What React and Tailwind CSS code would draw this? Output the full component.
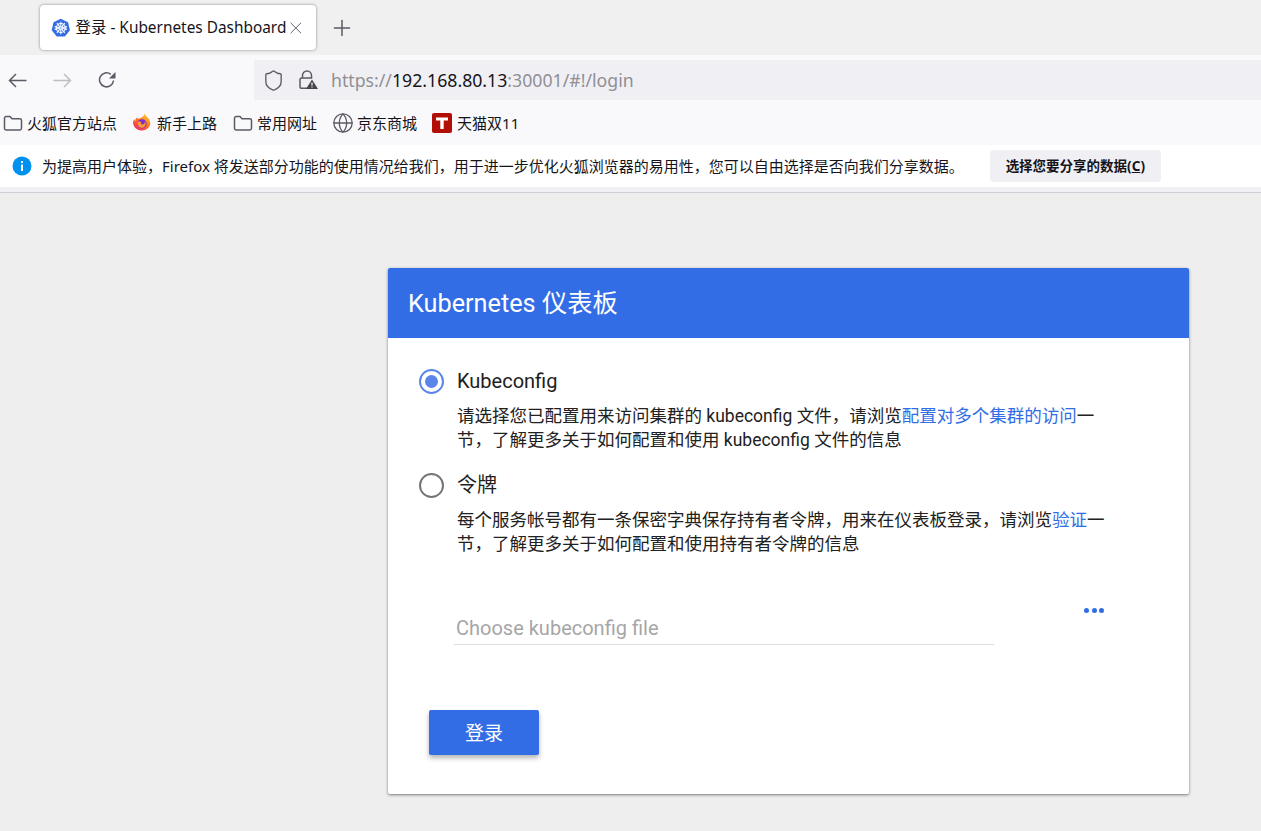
import { Globe, Plus, Shield, X } from "lucide-react";

const uiFont = "font-['Noto_Sans','Noto_Sans_CJK_SC',sans-serif]";
const cardFont = "font-['Roboto','Noto_Sans_CJK_SC',sans-serif]";

const K8sIcon = () => (
  <svg width="20" height="20" viewBox="0 0 20 20">
    <path d="M10 .6 17.4 4.2 19.3 12.2 14.1 18.7H5.900L.7 12.2 2.600 4.200Z" fill="#326de6" />
    <g stroke="#fff" strokeWidth="1.100" fill="none">
      <circle cx="10" cy="10" r="4.600" />
      <circle cx="10" cy="10" r="1.200" />
      <path d="M10 3.600V8.600M10 11.400V16.400M3.700 8.600 8.700 9.700M11.300 10.300 16.300 11.400M16.300 8.600 11.300 9.700M8.700 10.300 3.700 11.400M6 5 9 8.800M11 11.200 14 15M14 5 11 8.800M9 11.200 6 15" />
    </g>
  </svg>
);

const FirefoxIcon = () => (
  <svg width="20" height="20" viewBox="0 0 20 20">
    <defs>
      <linearGradient id="fx" x1="0.8" y1="0" x2="0.2" y2="1">
        <stop offset="0" stopColor="#ffd43a" />
        <stop offset="0.45" stopColor="#ff7a1a" />
        <stop offset="1" stopColor="#f5246e" />
      </linearGradient>
    </defs>
    <path d="M12.500.5c.6 2 2.400 3 3.600 4.400 1.900 2 2.600 4.600 2 7.200A9 9 0 0 1 1 10.200c0-1.600.4-3 1.200-4.300.1 1 .5 1.600 1 2 .2-1.600 1-2.800 2.200-3.400.1.6.3 1 .7 1.300C8.500 5 12 4 12.500.5Z" fill="url(#fx)" />
    <circle cx="10" cy="10.800" r="4.600" fill="#7b2fd0" />
    <path d="M5.400 9.200C7 8 8.500 8.300 9.500 9c-.8.500-1 1.800.2 2.300 1.800.7 3.500-.9 3.100-3 1.300 1.600 1.200 4.200-.6 5.600-2.500 1.900-6.500.7-6.800-4.700Z" fill="#ff9a2e" />
  </svg>
);

const LockWarnIcon = () => (
  <svg width="20" height="20" viewBox="0 0 20 20" fill="none">
    <path d="M4.500 8V5.500a4.500 4.500 0 0 1 9 0V8" stroke="#5b5b66" strokeWidth="1.500" />
    <path d="M9 18.200H3.800A1.800 1.800 0 0 1 2 16.400v-6.600A1.800 1.800 0 0 1 3.800 8h10.400" stroke="#5b5b66" strokeWidth="1.500" />
    <path d="M14 9.500 20 19H8Z" fill="#45454d" />
    <path d="M14 12.500v3M14 16.500v1" stroke="#fff" strokeWidth="1.200" />
  </svg>
);

const InfoIcon = () => (
  <svg width="20" height="20" viewBox="0 0 20 20">
    <circle cx="10" cy="10" r="9.500" fill="#0090ed" />
    <rect x="9" y="8.500" width="2" height="6.500" fill="#fff" />
    <rect x="9" y="5" width="2" height="2" fill="#fff" />
  </svg>
);

const TmallIcon = () => (
  <div className="mr-px flex h-5 w-5 items-center justify-center rounded-[2px] bg-[#b30e06]">
    <svg width="14" height="14" viewBox="0 0 14 14">
      <path d="M1 1.500h12v3H8.700V13H5.300V4.500H1Z" fill="#fff" />
    </svg>
  </div>
);

const BackIcon = ({ className }) => (
  <svg width="19" height="15" viewBox="0 0 19 15" fill="none" stroke="currentColor" strokeWidth="1.500" className={className}>
    <path d="M1.500 7.500H18.500M8 1 1.500 7.500 8 14" />
  </svg>
);

const ReloadIcon = () => (
  <svg width="18" height="18" viewBox="0 0 18 18" fill="none" className="text-[#5b5b66]">
    <path d="M15.500 9.500A7 7 0 1 1 12.800 3.300" stroke="currentColor" strokeWidth="1.500" />
    <path d="M17.500 1V7.500H11Z" fill="currentColor" />
  </svg>
);

const FolderIcon = () => (
  <svg width="20" height="20" viewBox="0 0 20 20" fill="none" stroke="#5b5b66" strokeWidth="1.500">
    <path d="M1.500 5.200A1.700 1.700 0 0 1 3.200 3.500H7L9 5.800H16.800A1.700 1.700 0 0 1 18.500 7.500V15.300A1.700 1.700 0 0 1 16.800 17H3.200A1.700 1.700 0 0 1 1.500 15.300Z" strokeLinejoin="round" />
  </svg>
);

const Bookmark = ({ icon, label, className = "" }) => (
  <div className={`flex items-center gap-1 ${className}`}>
    {icon}
    <span className="text-[15px] leading-5 text-[#15141a]">{label}</span>
  </div>
);

const Radio = ({ checked }) => (
  <div
    className={`flex h-[25px] w-[25px] shrink-0 items-center justify-center rounded-full border-2 ${
      checked ? "border-[#5a86ea]" : "border-[#757575]"
    }`}
  >
    {checked && <div className="h-[13px] w-[13px] rounded-full bg-[#5a86ea]" />}
  </div>
);

const Option = ({ checked, title, children, className = "" }) => (
  <div className={`flex gap-[13px] ${className}`}>
    <Radio checked={checked} />
    <div className="w-[650px]">
      <div className="h-[25px] text-[20px] leading-[25px] text-[#212121]">{title}</div>
      <p className="mt-[10px] text-[17.5px] leading-[24px] text-[#212121]">{children}</p>
    </div>
  </div>
);

const Link = ({ children }) => <span className="text-[#326de6]">{children}</span>;

export default function App() {
  return (
    <div className={`flex h-[831px] w-[1261px] flex-col overflow-hidden bg-[#eeeeee] ${uiFont}`}>
      {/* tab strip */}
      <div className="flex h-[55px] items-start bg-[#f0f0f0]">
        <div className="ml-10 mt-[5px] flex h-[45px] w-[276px] items-center rounded-[4px] bg-white pl-[11px] pr-[10px] shadow-[0_0_3px_rgba(0,0,0,0.45)]">
          <K8sIcon />
          <span className="ml-[5px] flex-1 whitespace-nowrap text-[15.4px] text-[#15141a]">登录 - Kubernetes Dashboard</span>
          <X size={20} strokeWidth={1.2} className="text-[#5b5b66]" />
        </div>
        <Plus size={26} strokeWidth={1.4} className="ml-[13px] mt-[15px] text-[#5b5b66]" />
      </div>

      {/* nav bar */}
      <div className="flex h-[45px] items-start bg-[#f9f9fb] pt-[5px]">
        <div className="flex h-[40px] w-[254px] items-center pl-[8px]">
          <BackIcon className="text-[#5b5b66]" />
          <BackIcon className="ml-[26px] -scale-x-100 text-[#bdbdc2]" />
          <div className="ml-[26px]">
            <ReloadIcon />
          </div>
        </div>
        <div className="flex h-[40px] flex-1 items-center bg-[#f0f0f4] pl-[8px]">
          <Shield size={23} strokeWidth={1.4} className="text-[#5b5b66]" />
          <div className="ml-[13px]">
            <LockWarnIcon />
          </div>
          <span className="ml-[13px] text-[17.7px] text-[#8f8f94]">
            https://<span className="text-[#15141a]">192.168.80.13</span>:30001/#!/login
          </span>
        </div>
      </div>

      {/* bookmarks */}
      <div className="flex h-[45px] items-center bg-[#f9f9fb] pl-[3px]">
        <Bookmark icon={<FolderIcon />} label="火狐官方站点" />
        <Bookmark icon={<div className="mr-px"><FirefoxIcon /></div>} label="新手上路" className="ml-[15px]" />
        <Bookmark icon={<FolderIcon />} label="常用网址" className="ml-4" />
        <Bookmark icon={<Globe size={22} strokeWidth={1.4} className="-mx-px text-[#5b5b66]" />} label="京东商城" className="ml-4" />
        <Bookmark icon={<TmallIcon />} label="天猫双11" className="ml-[15px]" />
      </div>

      {/* info bar */}
      <div className="flex h-[42px] items-center bg-white pl-[12px]">
        <InfoIcon />
        <span className="ml-[10px] whitespace-nowrap text-[15px] text-[#15141a]">
          为提高用户体验，Firefox 将发送部分功能的使用情况给我们，用于进一步优化火狐浏览器的易用性，您可以自由选择是否向我们分享数据。
        </span>
        <button className="ml-[26px] h-8 w-[171px] rounded-[4px] bg-[#f0f0f4] text-[13.5px] font-bold text-[#15141a]">
          选择您要分享的数据(<span className="underline">C</span>)
        </button>
      </div>
      <div className="h-[6px] border-b border-[#cfcfd8] bg-[#f0f0f4]" />

      {/* page */}
      <div className={`flex flex-1 items-start pl-[388px] pt-[75px] ${cardFont}`}>
        <div className="h-[526px] w-[801px] rounded-[2px] bg-white shadow-[0_1px_3px_rgba(0,0,0,0.5)]">
          <div className="flex h-[70px] items-center rounded-t-[2px] bg-[#326de6] pl-5 pt-px text-[25.25px] text-white">
            Kubernetes 仪表板
          </div>
          <div className="px-[31px] pt-[31px]">
            <Option checked title="Kubeconfig">
              请选择您已配置用来访问集群的 kubeconfig 文件，请浏览<Link>配置对多个集群的访问</Link>一节，了解更多关于如何配置和使用 kubeconfig 文件的信息
            </Option>
            <Option title="令牌" className="mt-[21px]">
              每个服务帐号都有一条保密字典保存持有者令牌，用来在仪表板登录，请浏览<Link>验证</Link>一节，了解更多关于如何配置和使用持有者令牌的信息
            </Option>
            <div className="ml-[35px] mt-[24px] flex items-start">
              <div className="mt-[30px] h-[35px] w-[540px] border-b border-[#dedede] pl-[2px] text-[20px] leading-[37px] text-[#a6a6a6]">
                Choose kubeconfig file
              </div>
              <div className="ml-[90px] mt-[28px] flex gap-[2.500px]">
                <div className="h-[5px] w-[5px] rounded-full bg-[#326de6]" />
                <div className="h-[5px] w-[5px] rounded-full bg-[#326de6]" />
                <div className="h-[5px] w-[5px] rounded-full bg-[#326de6]" />
              </div>
            </div>
            <button className="ml-[10px] mt-[65px] h-[45px] w-[110px] rounded-[2px] bg-[#326de6] pt-[3px] text-[19px] text-white shadow-[0_3px_5px_rgba(0,0,0,0.3)]">
              登录
            </button>
          </div>
        </div>
      </div>
    </div>
  );
}
